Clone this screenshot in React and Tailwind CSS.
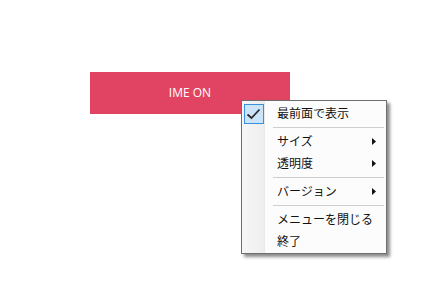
const jp = { fontFamily: '"Noto Sans CJK JP", "Noto Sans", sans-serif' };

function Arrow() {
  return (
    <svg width="4" height="7" viewBox="0 0 4 7" className="shrink-0">
      <path d="M0 0L4 3.5L0 7z" fill="#111" />
    </svg>
  );
}

function Item({ label, checked, sub }) {
  return (
    <div className="relative flex h-[22px] items-center pl-[35px] pr-[10px]">
      {checked && (
        <div className="absolute left-[2px] top-[2px] flex h-[20px] w-[20px] items-center justify-center border border-[#3c8fe0] bg-[#cce4f7]">
          <svg width="18" height="18" viewBox="0 0 18 18">
            <path d="M2.5 9.5L6.5 13L14.5 4.5" fill="none" stroke="#2b2b2b" strokeWidth="1.8" />
          </svg>
        </div>
      )}
      <span className="flex-1 text-[12px] leading-none text-[#111]">{label}</span>
      {sub && <Arrow />}
    </div>
  );
}

function Sep() {
  return (
    <div className="flex h-[6px] items-center pl-[31px] pr-[2px]">
      <div className="h-px w-full bg-[#cfcfcf]" />
    </div>
  );
}

export default function App() {
  return (
    <div className="relative h-[300px] w-[440px] bg-white">
      <div className="pl-[90px] pt-[72px]">
        <div
          className="flex h-[42px] w-[200px] items-center justify-center bg-[#e04462] text-[12px] text-white"
          style={{ fontFamily: '"Open Sans", "Noto Sans", sans-serif' }}
        >
          IME ON
        </div>
      </div>

      {/* context menu */}
      <div
        className="absolute left-[241px] top-[100px] w-[146px] border border-[#6e6e6e] bg-[linear-gradient(to_right,#f6f6f6_0,#efefef_21px,#e9e9e9_23px,#fcfcfc_23px)] py-px shadow-[3px_3px_3px_rgba(0,0,0,0.45)]"
        style={jp}
      >
        <Item label="最前面で表示" checked />
        <Sep />
        <Item label="サイズ" sub />
        <Item label="透明度" sub />
        <Sep />
        <Item label="バージョン" sub />
        <Sep />
        <Item label="メニューを閉じる" />
        <Item label="終了" />
      </div>
    </div>
  );
}
